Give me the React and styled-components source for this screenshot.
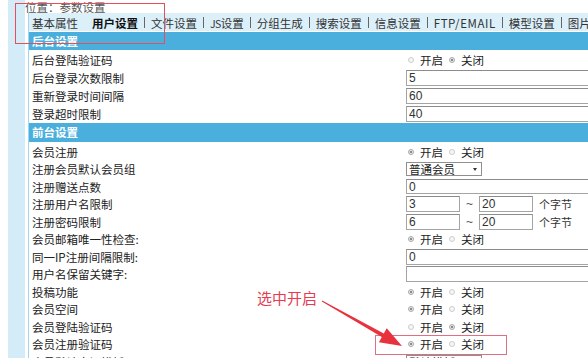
import React from "react";
import styled, { createGlobalStyle } from "styled-components";

const Global = createGlobalStyle`
  html, body { margin: 0; padding: 0; overflow: hidden; background: #fff; }
  body { font-family: "Noto Sans CJK SC", "Noto Sans", sans-serif; }
  * { box-sizing: border-box; }
`;

const Page = styled.div`
  position: relative;
  display: flex;
  width: 588px;
  height: 358px;
  overflow: hidden;
  background: #fff;
`;

const SideStrip = styled.div`
  flex: none;
  width: 17px;
  margin-left: 8px;
  background: #d4ecf8;
`;

const Main = styled.div`
  flex: 1;
  min-width: 0;
  overflow: hidden;
`;

const Location = styled.div`
  height: 13px;
  padding-top: 1px;
  font-size: 11.5px;
  line-height: 12px;
  color: #555;
  white-space: nowrap;
`;

const Content = styled.div`
  margin-left: 3px;
  border-left: 1px solid #a6d4ec;
`;

const TabBar = styled.div`
  display: flex;
  align-items: center;
  height: 18px;
  margin-bottom: 1px;
  padding-left: 3px;
  background: #dcf0fa;
  white-space: nowrap;
`;

const Tab = styled.div`
  flex: none;
  padding: ${(p) => (p.$first ? "0 8px 0 0" : "0 6px")};
  font-size: 11.5px;
  font-weight: ${(p) => (p.$active ? 700 : 400)};
  color: ${(p) => (p.$active ? "#111" : "#333")};
  line-height: 18px;
  margin-top: 2px;
`;

const Latin = styled.span`
  font-size: ${(p) => (p.$tight ? "10.5px" : "11.5px")};
  letter-spacing: ${(p) => (p.$tight ? "-0.6px" : "0.6px")};
`;

const Sep = styled.div`
  flex: none;
  width: 1px;
  height: 11px;
  background: #666;
`;

const SectionHeader = styled.div`
  height: ${(p) => p.$h}px;
  margin-bottom: ${(p) => p.$gap || 0}px;
  padding-left: 3px;
  background: #4aafdc;
  color: #fff;
  font-weight: 700;
  font-size: 11.5px;
  line-height: ${(p) => p.$h}px;
`;

const Row = styled.div`
  display: grid;
  grid-template-columns: 377px 1fr;
  align-items: center;
  height: ${(p) => p.$h}px;
`;

const Label = styled.div`
  padding-left: 3px;
  font-size: 11.5px;
  line-height: 14px;
  color: #222;
  white-space: nowrap;
`;

const Value = styled.div`
  display: flex;
  align-items: center;
  white-space: nowrap;
`;

const TextBox = styled.input`
  width: ${(p) => p.$w}px;
  height: ${(p) => p.$hh || 16}px;
  padding: 0 2px;
  margin: 0;
  border: 1px solid #a4a4a4;
  border-top-color: #8c8c8c;
  background: #fff;
  font-family: "Liberation Sans", Arial, sans-serif;
  font-size: 12px;
  color: #333;
  outline: none;
`;

const Tilde = styled.span`
  margin: 0 6px 0 6px;
  font-family: "Liberation Sans", Arial, sans-serif;
  font-size: 12px;
  color: #555;
`;

const Unit = styled.span`
  margin-left: 6px;
  font-size: 11px;
  color: #333;
`;

const SelectBox = styled.div`
  display: flex;
  align-items: center;
  justify-content: space-between;
  width: 76px;
  height: 14px;
  padding: 0 4px 0 2px;
  border: 1px solid #8f8f8f;
  background: #fff;
  font-size: 11.5px;
  line-height: 12px;
  color: #222;
`;

const Caret = styled.span`
  width: 0;
  height: 0;
  border-left: 2px solid transparent;
  border-right: 2px solid transparent;
  border-top: 3px solid #333;
`;

const RadioGroup = styled.div`
  display: flex;
  align-items: center;
  padding-left: 2px;
`;

const Dot = styled.span`
  flex: none;
  width: 6px;
  height: 6px;
  border-radius: 50%;
  border: 1px solid ${(p) => (p.$on ? "#a8a8a8" : "#cdcdcd")};
  background: ${(p) => (p.$on ? "radial-gradient(circle, #8a8a8a 0 40%, #e8e8e8 50%)" : "#f6f6f6")};
  margin-right: 6px;
`;

const RadioText = styled.span`
  font-size: 11.5px;
  line-height: 14px;
  color: #222;
  margin-right: 6px;
`;

const Note = styled.div`
  position: absolute;
  left: 257px;
  top: 289px;
  font-size: 15px;
  line-height: 18px;
  color: #e63b50;
  white-space: nowrap;
`;

const RedBox = styled.div`
  position: absolute;
  left: ${(p) => p.$x}px;
  top: ${(p) => p.$y}px;
  width: ${(p) => p.$w}px;
  height: ${(p) => p.$h}px;
  border: 1px solid ${(p) => p.$c || "#e2505c"};
  pointer-events: none;
`;

const Overlay = styled.svg`
  position: absolute;
  left: 0;
  top: 0;
  pointer-events: none;
`;

const tabs = [
  { t: "基本属性" },
  { t: "用户设置" },
  { t: "文件设置" },
  { t: "设置", latin: "JS", tight: true },
  { t: "分组生成" },
  { t: "搜索设置" },
  { t: "信息设置" },
  { t: "", latin: "FTP/EMAIL" },
  { t: "模型设置" },
  { t: "图片设置" },
];

function Radio({ on }) {
  return (
    <RadioGroup>
      <Dot $on={on === 1} />
      <RadioText>开启</RadioText>
      <Dot $on={on === 0} />
      <RadioText>关闭</RadioText>
    </RadioGroup>
  );
}

function Range({ a, b }) {
  return (
    <>
      <TextBox $w={54} readOnly value={a} />
      <Tilde>~</Tilde>
      <TextBox $w={54} readOnly value={b} />
      <Unit>个字节</Unit>
    </>
  );
}

export default function App() {
  const R = 17.5;
  return (
    <Page>
      <Global />
      <SideStrip />
      <Main>
        <Location>位置：参数设置</Location>
        <Content>
          <TabBar>
            {tabs.map((tab, i) => (
              <React.Fragment key={i}>
                <Tab $first={i === 0} $active={i === 1}>
                  {tab.latin && <Latin $tight={tab.tight}>{tab.latin}</Latin>}
                  {tab.t}
                </Tab>
                {i >= 1 && <Sep />}
              </React.Fragment>
            ))}
          </TabBar>
          <SectionHeader $h={18}>后台设置</SectionHeader>
          <Row $h={19}><Label>后台登陆验证码</Label><Value><Radio on={0} /></Value></Row>
          <Row $h={18}><Label>后台登录次数限制</Label><Value><TextBox $w={260} readOnly value="5" /></Value></Row>
          <Row $h={18}><Label>重新登录时间间隔</Label><Value><TextBox $w={260} readOnly value="60" /></Value></Row>
          <Row $h={18}><Label>登录超时限制</Label><Value><TextBox $w={260} readOnly value="40" /></Value></Row>
          <SectionHeader $h={19} $gap={1}>前台设置</SectionHeader>
          <Row $h={R}><Label>会员注册</Label><Value><Radio on={1} /></Value></Row>
          <Row $h={R}><Label>注册会员默认会员组</Label><Value><SelectBox>普通会员<Caret /></SelectBox></Value></Row>
          <Row $h={R}><Label>注册赠送点数</Label><Value><TextBox $w={260} $hh={15} readOnly value="0" /></Value></Row>
          <Row $h={R}><Label>注册用户名限制</Label><Value><Range a="3" b="20" /></Value></Row>
          <Row $h={R}><Label>注册密码限制</Label><Value><Range a="6" b="20" /></Value></Row>
          <Row $h={R}><Label>会员邮箱唯一性检查:</Label><Value><Radio on={1} /></Value></Row>
          <Row $h={R}><Label>同一IP注册间隔限制:</Label><Value><TextBox $w={260} readOnly value="0" /></Value></Row>
          <Row $h={R}><Label>用户名保留关键字:</Label><Value><TextBox $w={260} readOnly value="" /></Value></Row>
          <Row $h={R}><Label>投稿功能</Label><Value><Radio on={1} /></Value></Row>
          <Row $h={R}><Label>会员空间</Label><Value><Radio on={1} /></Value></Row>
          <Row $h={R}><Label>会员登陆验证码</Label><Value><Radio on={0} /></Value></Row>
          <Row $h={R}><Label>会员注册验证码</Label><Value><Radio on={1} /></Value></Row>
          <Row $h={R}><Label>会员默认空间模板</Label><Value><SelectBox>默认模板<Caret /></SelectBox></Value></Row>
        </Content>
      </Main>

      <RedBox $x={15} $y={3} $w={150} $h={41} />
      <RedBox $x={375} $y={335} $w={132} $h={20} $c="#e07080" />
      <Note>选中开启</Note>
      <Overlay width="588" height="358" viewBox="0 0 588 358">
        <polygon
          points="322.2,300.6 383.8,333.5 386.7,328.2 402,346 378.9,342.2 381.8,336.9 321.8,301.4"
          fill="#e8333f"
        />
      </Overlay>
    </Page>
  );
}
